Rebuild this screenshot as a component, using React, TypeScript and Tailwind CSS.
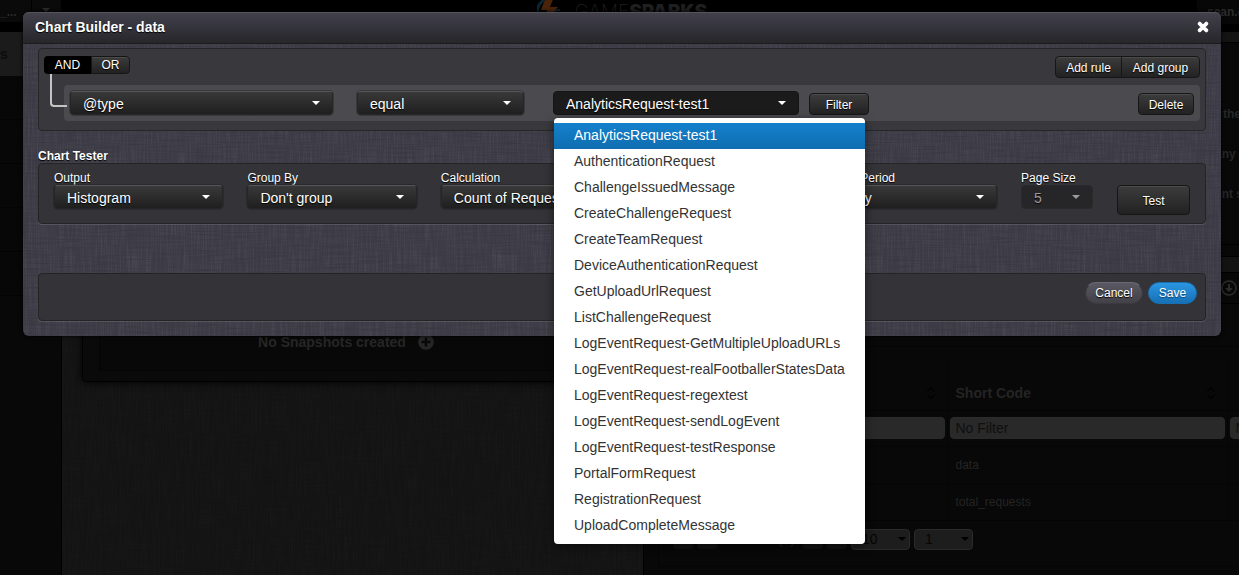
import { useState } from "react";
import type { ReactNode } from "react";
import { ChevronsUpDown } from "lucide-react";
import { FaPlusCircle, FaRegArrowAltCircleDown, FaTimes } from "react-icons/fa";

const requestTypes = [
  "AnalyticsRequest-test1",
  "AuthenticationRequest",
  "ChallengeIssuedMessage",
  "CreateChallengeRequest",
  "CreateTeamRequest",
  "DeviceAuthenticationRequest",
  "GetUploadUrlRequest",
  "ListChallengeRequest",
  "LogEventRequest-GetMultipleUploadURLs",
  "LogEventRequest-realFootballerStatesData",
  "LogEventRequest-regextest",
  "LogEventRequest-sendLogEvent",
  "LogEventRequest-testResponse",
  "PortalFormRequest",
  "RegistrationRequest",
  "UploadCompleteMessage",
];

/* Woven cloth: fine vertical and horizontal threads over the parent's colour. */
function Weave({ id, className }: { id: string; className: string }) {
  return (
    <svg aria-hidden="true" className={`pointer-events-none absolute inset-0 h-full w-full ${className}`}>
      <filter id={`${id}-v`} x="0" y="0" width="100%" height="100%">
        <feTurbulence type="fractalNoise" baseFrequency="0.7 0.03" numOctaves="2" seed="4" />
        <feColorMatrix values="0 0 0 0 1  0 0 0 0 1  0 0 0 0 1  2 0 0 0 -0.8" />
      </filter>
      <filter id={`${id}-h`} x="0" y="0" width="100%" height="100%">
        <feTurbulence type="fractalNoise" baseFrequency="0.03 0.7" numOctaves="2" seed="9" />
        <feColorMatrix values="0 0 0 0 0  0 0 0 0 0  0 0 0 0 0  2 0 0 0 -0.8" />
      </filter>
      <rect width="100%" height="100%" filter={`url(#${id}-v)`} />
      <rect width="100%" height="100%" filter={`url(#${id}-h)`} />
    </svg>
  );
}

function Caret({ className }: { className: string }) {
  return (
    <svg aria-hidden="true" viewBox="0 0 8 4" className={`pointer-events-none h-1 w-2 ${className}`}>
      <path d="M0 0h8L4 4z" fill="currentColor" />
    </svg>
  );
}

type SelectProps = {
  id: string;
  label?: string;
  value: string;
  open?: boolean;
  disabled?: boolean;
  onOpen?: () => void;
};

function Select({ id, label, value, open, disabled, onOpen }: SelectProps) {
  const look = disabled
    ? "border-[#2a2a2c] bg-[#262628] text-[#9c9c9c]"
    : open
      ? "border-[#161617] bg-[#1b1b1c] text-white"
      : "border-[#262627] border-t-[#555557] bg-linear-to-b from-[#393939] to-[#1f1f1f] text-white shadow-[0_0_0_1px_rgba(30,30,32,0.4)]";
  return (
    <div className="relative">
      <select
        id={id}
        aria-label={label}
        disabled={disabled}
        onMouseDown={(e) => {
          if (onOpen) {
            e.preventDefault();
            onOpen();
          }
        }}
        className={`block h-6 w-full appearance-none rounded border pl-3 pr-6 pt-0.5 text-sm leading-5 opacity-100 [text-shadow:0_1px_1px_#000] ${look}`}
      >
        <option>{value}</option>
      </select>
      <Caret className={`absolute right-[13px] top-2.5 ${disabled ? "text-[#9c9c9c]" : "text-white"}`} />
    </div>
  );
}

function Field({ id, label, value, disabled }: { id: string; label: string; value: string; disabled?: boolean }) {
  return (
    <>
      <label htmlFor={id} className="block h-4 text-xs leading-[18px] text-white [text-shadow:0_1px_1px_#000]">
        {label}
      </label>
      <Select id={id} value={value} disabled={disabled} />
    </>
  );
}

function DarkButton({ children, className }: { children: ReactNode; className: string }) {
  return (
    <button
      type="button"
      className={`border border-[#161616] bg-linear-to-b from-[#3c3c3c] to-[#222] text-center text-xs text-white shadow-[inset_0_1px_0_rgba(255,255,255,0.08)] [text-shadow:0_1px_1px_#000] ${className}`}
    >
      {children}
    </button>
  );
}

function Logo() {
  return (
    <div className="flex h-8 items-start gap-2.5">
      <svg viewBox="0 0 28 28" className="h-7 w-7" aria-hidden="true">
        <path d="M7 0C2 3 0 8 0 14" fill="none" stroke="#0b2530" strokeWidth="3" />
        <path d="M16 11.500c2-1 4-1.500 7-1.500" fill="none" stroke="#0b2530" strokeWidth="2" />
        <path d="M9 -3h8l-4 10h8L8 22l2-12H4z" fill="#4a230a" />
      </svg>
      <div className="pt-0.5 font-[Inter] text-[19px] leading-5 text-[#1f1f1f]">
        <span className="font-extralight">GAME</span>
        <span className="font-black">SPARKS</span>
      </div>
    </div>
  );
}

function TopBar() {
  return (
    <header className="flex h-8 justify-between bg-black text-xs font-bold text-[#2b2b2b]">
      <div className="flex h-[22px] w-[61px] bg-[#0a0a0a]">
        <span className="w-8 border-r border-black leading-6">_...</span>
        <Caret className="ml-2.5 mt-2 text-[#2b2b2b]" />
      </div>
      <div className="pr-[14px]">
        <Logo />
      </div>
      <div className="h-6 w-[42px] overflow-hidden bg-[#070707] pl-2.5 leading-6 whitespace-nowrap">sean.d</div>
    </header>
  );
}

function Sidebar() {
  return (
    <nav className="w-[62px] shrink-0 border-r border-black bg-[#080808] text-sm font-bold text-[#0c0c0c]">
      <div className="h-11 bg-[#1b1b1b] leading-[44px]">s</div>
      {[0, 1, 2, 3, 4].map((n) => (
        <div key={n} className="h-11 border-b border-[#030303] bg-[#070707]" />
      ))}
    </nav>
  );
}

function FilterInput({ label }: { label: string }) {
  return (
    <input
      type="text"
      aria-label={label}
      placeholder="No Filter"
      className="block h-[22px] w-full rounded-sm border border-[#2b2b2b] bg-[#292929] px-[5px] text-sm text-[#0f0f0f] placeholder:text-[#0f0f0f]"
    />
  );
}

function PagerSelect({ label, value }: { label: string; value: string }) {
  return (
    <div className="relative">
      <select
        aria-label={label}
        className="block h-[21px] w-[59px] appearance-none rounded-sm border border-[#2a2a2a] bg-[#1d1d1d] pl-2.5 text-sm leading-4 text-[#050505]"
      >
        <option>{value}</option>
      </select>
      <Caret className="absolute right-1 top-2 text-black" />
    </div>
  );
}

function PagerButton({ children, label }: { children: ReactNode; label: string }) {
  return (
    <button type="button" aria-label={label} className="h-5 w-5 rounded bg-[#121212] text-xs leading-5 text-[#050505]">
      {children}
    </button>
  );
}

function ShortCodes() {
  const edge = "border-r border-b border-[#050505]";
  return (
    <div className="ml-3.5 h-[210px] rounded-b border-l border-b border-[#050505]">
      <table className="w-[760px] table-fixed text-left text-xs text-[#242424]">
        <colgroup>
          <col className="w-[288px]" />
          <col className="w-[280px]" />
          <col />
        </colgroup>
        <thead>
          <tr className="h-[53px] text-sm">
            <th className={`pr-2 pt-5 ${edge}`}>
              <ChevronsUpDown className="ml-auto h-4 w-4 text-[#020202]" />
            </th>
            <th className={`pl-2 pr-2 pt-5 ${edge}`}>
              <div className="flex items-center justify-between">
                Short Code
                <ChevronsUpDown className="h-4 w-4 text-[#020202]" />
              </div>
            </th>
            <th className={edge} />
          </tr>
        </thead>
        <tbody>
          <tr className="h-9">
            <td className={`px-0.5 ${edge}`}><FilterInput label="Filter names" /></td>
            <td className={`px-0.5 ${edge}`}><FilterInput label="Filter short codes" /></td>
            <td className={`px-0.5 ${edge}`}><FilterInput label="Filter descriptions" /></td>
          </tr>
          {["data", "total_requests"].map((code) => (
            <tr key={code} className="h-[37px]">
              <td className={edge} />
              <td className={`pl-2 ${edge}`}>{code}</td>
              <td className={edge} />
            </tr>
          ))}
        </tbody>
      </table>
      <div className="flex items-center gap-1 pl-3.5 pt-2">
        <PagerButton label="First page">«</PagerButton>
        <PagerButton label="Previous page">‹</PagerButton>
        <span className="w-[78px] pr-1 text-right text-sm text-[#222]">(1)</span>
        <PagerButton label="Next page">›</PagerButton>
        <PagerButton label="Last page">»</PagerButton>
        <PagerSelect label="Rows per page" value="10" />
        <PagerSelect label="Page" value="1" />
      </div>
    </div>
  );
}

function Page() {
  return (
    <div className="flex h-screen flex-col bg-black">
      <TopBar />
      <div className="flex min-h-0 grow">
        <Sidebar />
        <main className="relative flex min-w-0 grow items-start overflow-hidden bg-[#141414] pl-5">
          <Weave id="page" className="opacity-[0.02]" />
          <section className="relative flex h-[350px] w-[528px] shrink-0 flex-col justify-end rounded-b border border-black bg-[#0a0a0b] px-4 pb-2.5 shadow-[0_0_8px_#000]">
            <div className="flex items-center justify-center gap-3 rounded-b border border-t-0 border-[#050505] bg-[#080808] pb-[18px] text-sm font-bold leading-5 text-[#262626]">
              No Snapshots created
              <FaPlusCircle className="h-4 w-4" />
            </div>
          </section>
          <section className="relative ml-[33px] h-[543px] w-[800px] shrink-0 border-l border-black bg-[#080808]">
            <div className="h-[10px] bg-[#141414]" />
            <div className="flex h-[202px] flex-col gap-6 border-t border-black pl-[571px] pt-[63px] text-xs font-bold leading-4 text-[#262626]">
              <p className="pl-2">the</p>
              <p>any d</p>
              <p>ent s</p>
            </div>
            <div className="h-[13px] border-y border-black" />
            <div className="h-[15px] bg-[#131313]" />
            <div className="flex h-8 items-center border-y border-black pl-[577px] text-[#2b2b2b]">
              <FaRegArrowAltCircleDown className="h-4 w-4" />
            </div>
            <div className="h-[43px] border-b border-[#050505]" />
            <div className="h-[10px]" />
            <ShortCodes />
          </section>
        </main>
      </div>
    </div>
  );
}

function TypeMenu({ selected, onSelect }: { selected: string; onSelect: (value: string) => void }) {
  return (
    <ul
      role="listbox"
      aria-label="Request type"
      className="absolute left-px top-[27px] z-20 w-[311px] rounded bg-white py-[5px] text-sm leading-6 text-[#333] shadow-[0_2px_10px_rgba(0,0,0,0.5)]"
    >
      {requestTypes.map((type) => (
        <li
          key={type}
          role="option"
          aria-selected={type === selected}
          onClick={() => onSelect(type)}
          className={`pb-0.5 pl-5 ${type === selected ? "bg-linear-to-b from-[#1481cc] to-[#0f6db0] text-white" : ""}`}
        >
          {type}
        </li>
      ))}
    </ul>
  );
}

function RuleBuilder() {
  const [type, setType] = useState(requestTypes[0]);
  const [open, setOpen] = useState(true);
  return (
    <section className="rounded border border-[#262629] bg-[#39383c] px-[5px] pb-[9px] pt-[7px]">
      <div className="flex h-[18px] items-start justify-between">
        <div className="flex">
          <button type="button" className="h-[18px] w-[47px] rounded-l-sm bg-black text-xs leading-4 text-white">
            AND
          </button>
          <DarkButton className="h-[18px] w-[39px] rounded-r-sm leading-4">OR</DarkButton>
        </div>
        <div className="flex">
          <DarkButton className="h-[22px] w-[67px] rounded-l-sm pt-0.5">Add rule</DarkButton>
          <DarkButton className="-ml-px h-[22px] w-[79px] rounded-r-sm pt-0.5">Add group</DarkButton>
        </div>
      </div>
      <div className="flex items-start pl-1.5">
        <div className="z-10 -mr-[3px] h-[33px] w-[17px] shrink-0 rounded-bl border-b-2 border-l-2 border-[#c4c4c4]" />
        <div className="mt-[11px] flex h-9 grow items-start rounded bg-[#4b4a4f] px-1.5 pt-1.5">
          <div className="w-[263px]">
            <Select id="rule-field" label="Rule field" value="@type" />
          </div>
          <div className="ml-6 w-[167px]">
            <Select id="rule-operator" label="Rule operator" value="equal" />
          </div>
          <div className="relative ml-[29px] w-[246px]">
            <Select id="rule-value" label="Rule value" value={type} open={open} onOpen={() => setOpen(!open)} />
            {open && (
              <TypeMenu
                selected={type}
                onSelect={(next) => {
                  setType(next);
                  setOpen(false);
                }}
              />
            )}
          </div>
          <DarkButton className="ml-2.5 mt-0.5 h-[22px] w-[60px] rounded pt-0.5">Filter</DarkButton>
          <DarkButton className="ml-auto mt-0.5 h-[22px] w-[56px] rounded pt-0.5">Delete</DarkButton>
        </div>
      </div>
    </section>
  );
}

function ChartTester() {
  return (
    <section className="pt-4">
      <h3 className="h-4 text-xs font-bold leading-[18px] text-white [text-shadow:0_1px_1px_#000]">Chart Tester</h3>
      <div className="flex items-start gap-6 rounded border border-[#242427] bg-[#333338] px-[15px] pb-2 pt-[5px] shadow-[0_1px_0_rgba(255,255,255,0.12)]">
        <div className="min-w-0 flex-1"><Field id="output" label="Output" value="Histogram" /></div>
        <div className="min-w-0 flex-1"><Field id="group-by" label="Group By" value="Don't group" /></div>
        <div className="min-w-0 flex-1"><Field id="calculation" label="Calculation" value="Count of Requests" /></div>
        <div className="min-w-0 flex-1" />
        <div className="min-w-0 flex-1"><Field id="period" label="Chart Period" value="Daily" /></div>
        <div className="w-[72px]"><Field id="page-size" label="Page Size" value="5" disabled /></div>
        <DarkButton className="mt-4 h-[30px] w-[73px] rounded pt-0.5">Test</DarkButton>
      </div>
    </section>
  );
}

function ChartBuilder() {
  return (
    <div className="absolute inset-x-0 top-0 pl-[23px] pr-[18px] pt-3">
      <div
        role="dialog"
        aria-label="Chart Builder - data"
        className="relative rounded-md bg-[#3e3d47] shadow-[0_0_4px_#000]"
      >
        <Weave id="dialog" className="rounded-md opacity-[0.07]" />
        <div className="relative flex h-8 items-center justify-between rounded-t-md border-b border-t border-b-[#1c1c1f] border-t-[#55545e] bg-linear-to-b from-[#42414b] to-[#26262b] pb-0.5 pl-3 pr-[11px] text-white">
          <h2 className="text-sm font-bold [text-shadow:0_1px_1px_#000]">Chart Builder - data</h2>
          <button type="button" aria-label="Close">
            <FaTimes className="h-3.5 w-3.5 stroke-white stroke-[40]" />
          </button>
        </div>
        <div className="relative px-[15px] pb-[15px] pt-1">
          <RuleBuilder />
          <ChartTester />
          <div className="mt-[49px] flex h-12 items-start justify-end gap-[5px] rounded border border-[#242427] bg-[#333338] px-2 pt-2 shadow-[0_1px_0_rgba(255,255,255,0.12)]">
            <button
              type="button"
              className="h-[22px] w-[58px] rounded-full border border-[#3a3a40] border-t-[#6a6973] bg-linear-to-b from-[#5a5963] to-[#424148] text-xs text-white [text-shadow:0_1px_1px_#000]"
            >
              Cancel
            </button>
            <button
              type="button"
              className="h-[22px] w-[49px] rounded-full border border-[#1670b2] bg-linear-to-b from-[#2c96e2] to-[#1670b6] text-xs text-white [text-shadow:0_1px_1px_#0a4270]"
            >
              Save
            </button>
          </div>
        </div>
      </div>
    </div>
  );
}

export default function App() {
  return (
    <div className="relative h-screen overflow-hidden font-['Liberation_Sans',Arial,sans-serif]">
      <Page />
      <ChartBuilder />
    </div>
  );
}
